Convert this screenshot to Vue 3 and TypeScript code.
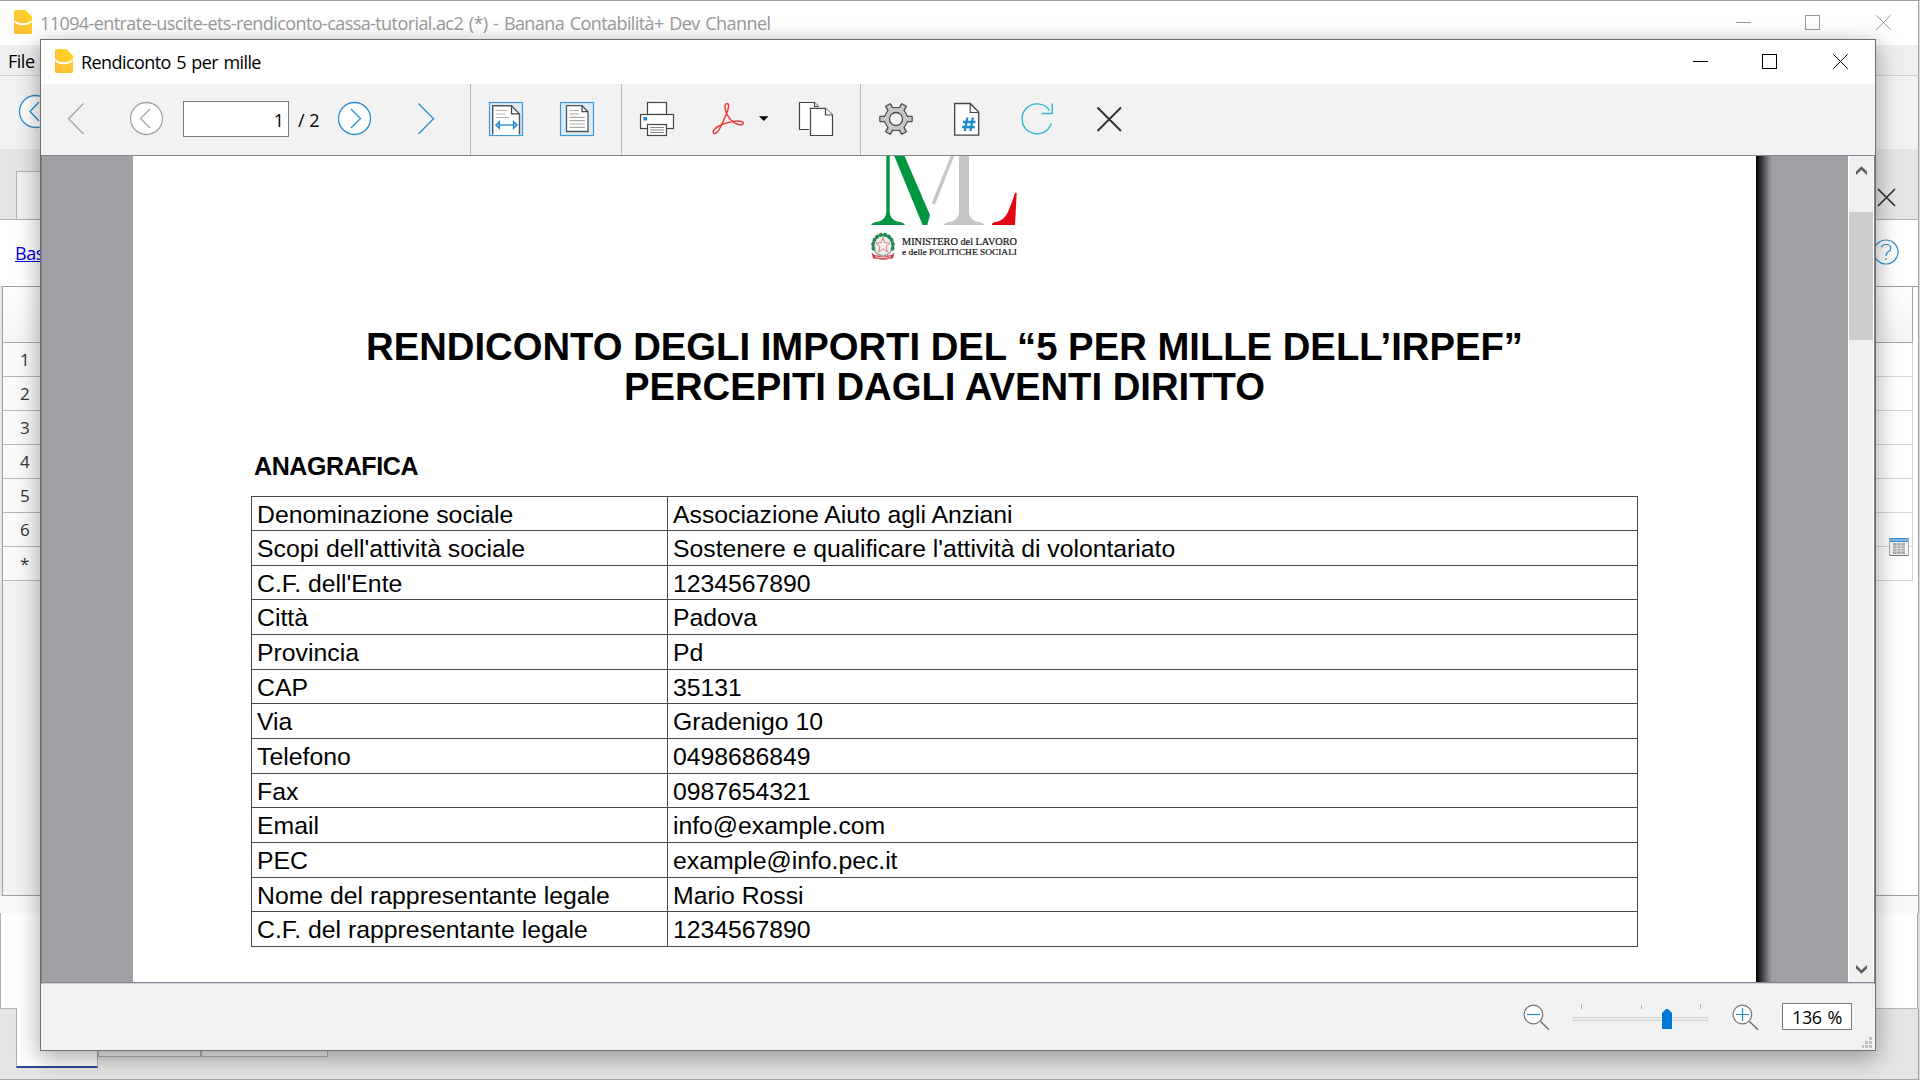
<script setup lang="ts">
interface Entry {
  label: string
  value: string
  height: number
}

const entries: Entry[] = [
  { label: 'Denominazione sociale', value: 'Associazione Aiuto agli Anziani', height: 34 },
  { label: "Scopi dell'attività sociale", value: "Sostenere e qualificare l'attività di volontariato", height: 35 },
  { label: "C.F. dell'Ente", value: '1234567890', height: 34 },
  { label: 'Città', value: 'Padova', height: 35 },
  { label: 'Provincia', value: 'Pd', height: 35 },
  { label: 'CAP', value: '35131', height: 34 },
  { label: 'Via', value: 'Gradenigo 10', height: 35 },
  { label: 'Telefono', value: '0498686849', height: 35 },
  { label: 'Fax', value: '0987654321', height: 34 },
  { label: 'Email', value: 'info@example.com', height: 35 },
  { label: 'PEC', value: 'example@info.pec.it', height: 35 },
  { label: 'Nome del rappresentante legale', value: 'Mario Rossi', height: 34 },
  { label: 'C.F. del rappresentante legale', value: '1234567890', height: 35 },
]

const sheetRows: string[] = ['1', '2', '3', '4', '5', '6', '*']
const gearTeeth: number[] = [0, 60, 120, 180, 240, 300]
const leafAngles: number[] = [165, 188, 211, 234, 257, 283, 306, 329, 352, 15]
</script>

<template>
  <div class="screen">
    <div class="main-window">
      <header class="main-title">
        <svg class="app-icon" viewBox="0 0 18 24">
          <defs>
            <linearGradient id="bananaMain" x1="1" y1="0" x2="0" y2="1">
              <stop offset="0" stop-color="#ffd91f" /><stop offset="1" stop-color="#ffb940" />
            </linearGradient>
          </defs>
          <path d="M2 0H11.5L18 6.5V22.500Q18 24 16.500 24H1.500Q0 24 0 22.500V2Q0 0 2 0Z" fill="url(#bananaMain)" />
          <path d="M0 10.500Q9 16 18 10.500V11.500Q15 15.300 9 15.300Q3 15.300 0 11.800Z" fill="#fff" />
        </svg>
        <span class="main-title-text">11094-entrate-uscite-ets-rendiconto-cassa-tutorial.ac2 (*) - Banana Contabilità+ Dev Channel</span>
        <svg class="window-controls" width="160" height="44" viewBox="1734 1 160 44" fill="none" stroke="#999">
          <path d="M1736 22.500H1751" />
          <rect x="1805.500" y="15.500" width="14" height="14" />
          <path d="M1876.300 15.300L1890.700 29.700M1890.700 15.300L1876.300 29.700" />
        </svg>
      </header>
      <nav class="main-menu"><span>File</span></nav>
      <div class="main-toolbar">
        <svg width="40" height="73" viewBox="0 76 40 73" fill="#fff" stroke="#2a8dd0" stroke-width="1.300">
          <circle cx="35.500" cy="111.500" r="16" /><path d="M39 102L30 111.500L39 121" fill="none" />
        </svg>
      </div>
      <div class="main-tabs">
        <div class="main-tab"></div>
        <svg width="40" height="40" viewBox="1870 179 40 40" stroke="#333" stroke-width="1.700">
          <path d="M1878 189L1895 206M1895 189L1878 206" />
        </svg>
      </div>
      <div class="view-bar">
        <a class="view-link">Base</a>
        <svg width="40" height="40" viewBox="1870 233 40 40" fill="none" stroke="#2a8dd0" stroke-width="1.200">
          <circle cx="1886" cy="252" r="12" />
          <path d="M1881.500 247.500Q1882 244.500 1886 244.500Q1890.700 244.500 1890.700 248.500Q1890.700 250.500 1888 252Q1886 253.200 1886 256" />
          <path d="M1886 258.200V259.800" stroke-width="1.500" />
        </svg>
      </div>
      <div class="sheet">
        <div class="sheet-numbers">
          <div class="sheet-corner"></div>
          <div v-for="n in sheetRows" :key="n" class="sheet-number">{{ n }}</div>
        </div>
        <div class="sheet-body">
          <div class="sheet-head"></div>
          <div v-for="n in sheetRows" :key="n" class="sheet-row"></div>
          <svg class="calendar" width="20" height="18" viewBox="0 0 20 18">
            <rect x=".5" y=".5" width="19" height="17" fill="#f4f4f4" stroke="#aaa" />
            <rect x="1" y="0" width="18" height="4" fill="#7dbcec" /><path d="M1 .5H19M1 3.500H19" stroke="#3d8ccc" />
            <rect x="4" y="5" width="12" height="11" fill="#a8a8a8" />
            <path d="M4 8H16M4 10.500H16M4 13H16M8 5V16M12 5V16" stroke="#eee" stroke-width=".8" />
            <path d="M1 17.500H19" stroke="#777" />
          </svg>
        </div>
      </div>
      <div class="splitter"></div>
      <div class="info-panel"></div>
      <footer class="bottom-tabs">
        <div class="bottom-tab active"></div>
        <div class="bottom-tab second"></div>
        <div class="bottom-tab third"></div>
      </footer>
    </div>

    <div class="dialog">
      <header class="dialog-title">
        <svg class="app-icon" viewBox="0 0 18 24">
          <path d="M2 0H11.5L18 6.5V22.500Q18 24 16.500 24H1.500Q0 24 0 22.500V2Q0 0 2 0Z" fill="url(#bananaMain)" />
          <path d="M0 10.500Q9 16 18 10.500V11.500Q15 15.300 9 15.300Q3 15.300 0 11.800Z" fill="#fff" />
        </svg>
        <span class="dialog-title-text">Rendiconto 5 per mille</span>
        <svg class="window-controls" width="160" height="44" viewBox="1691 40 160 44" fill="none" stroke="#000">
          <path d="M1693 61.500H1708" />
          <rect x="1762.500" y="54.500" width="14" height="14" />
          <path d="M1833.300 54.300L1847.700 68.700M1847.700 54.300L1833.300 68.700" />
        </svg>
      </header>

      <div class="toolbar">
        <svg class="tool first" viewBox="1 0 70 71" fill="none" stroke="#a3a3a3" stroke-width="1.300">
          <path d="M43.500 19.500L28.500 34.800L43.500 50" />
        </svg>
        <svg class="tool" viewBox="0 0 71 71" fill="#fff" stroke="#a3a3a3" stroke-width="1.300">
          <circle cx="35.500" cy="34.500" r="16" /><path d="M39 25L29.500 34.500L39 44" fill="none" />
        </svg>
        <div class="page-input">1</div>
        <div class="page-total">/ 2</div>
        <svg class="tool" viewBox="0 0 71 71" fill="#fff" stroke="#2a8dd0" stroke-width="1.300">
          <circle cx="35.500" cy="34.500" r="16" /><path d="M32 25L41.500 34.500L32 44" fill="none" />
        </svg>
        <svg class="tool" viewBox="0 0 71 71" fill="none" stroke="#2a8dd0" stroke-width="1.300">
          <path d="M28.500 19.500L43.500 34.800L28.500 50" />
        </svg>
        <i class="separator gap-nine"></i>
        <svg class="tool" viewBox="0 0 71 71" fill="none">
          <rect x="18.500" y="18.500" width="33" height="33" fill="#dcecf7" stroke="#3f9ad6" stroke-width="1.200" />
          <path d="M21.500 51V21.500H40L48.500 30V51Z" fill="#fff" />
          <path d="M21.700 50.500V21.700H40.500L48.500 30V50.500" stroke="#555" stroke-width="1.400" />
          <path d="M40.500 21.700V29.800H48.500" stroke="#444" stroke-width="1.200" />
          <path d="M25 26.500H36.500M25 30H34M25 33.500H38" stroke="#b3b3b3" stroke-width="1.100" />
          <path d="M25 41H46" stroke="#1e88d0" stroke-width="1.300" />
          <path d="M28.500 37.500V44.500L24.800 41ZM42.500 37.500V44.500L46.200 41Z" fill="#8bc0e6" stroke="#1e88d0" stroke-width="1.200" />
        </svg>
        <svg class="tool" viewBox="0 0 71 71" fill="none">
          <rect x="18.500" y="18.500" width="33" height="33" fill="#dcecf7" stroke="#3f9ad6" stroke-width="1.200" />
          <path d="M24.500 21.700H40L46 27.700V47.500H24.500Z" fill="#fff" stroke="#555" stroke-width="1.300" />
          <path d="M40 21.700V27.700H46" stroke="#444" stroke-width="1.200" />
          <path d="M27.500 26.500H37M27.500 30H37M27.500 33.300H43M27.500 36.700H43M27.500 40H43M27.500 43.300H43" stroke="#aaa" stroke-width="1.200" />
        </svg>
        <i class="separator gap-eight"></i>
        <svg class="tool" viewBox="0 0 71 71" fill="#fff" stroke="#444" stroke-width="1.200">
          <rect x="25.500" y="18.500" width="19" height="12" />
          <rect x="18.500" y="30.500" width="33" height="14" />
          <rect x="25.500" y="40.500" width="19" height="11" />
          <rect x="21.500" y="33" width="3.500" height="3.500" fill="#1e88d0" stroke="none" />
          <path d="M28 43.500H42M28 46H42M28 48.500H42" stroke="#888" />
        </svg>
        <svg class="tool" viewBox="0 0 71 71" fill="none" stroke="#f03a3a" stroke-width="1.500" stroke-linejoin="round">
          <path d="M32 21.500C33 18.500 36 19 35.600 22.500C35.200 27.500 31 35.500 27.500 43C25.500 47.500 22.500 50.500 20.800 49.300C18.800 47.800 22 43.500 27 41.500C32 39.300 38.500 37.200 44.500 37C50.500 36.900 51.500 39.500 49.300 40.500C46.500 41.600 41.500 39.500 37.500 35.500C34 31.500 31 25 32 21.500Z" />
        </svg>
        <svg class="dropdown" width="16" height="71" viewBox="755 84 16 71"><path d="M759 116.200H768.500L763.800 121Z" fill="#000" /></svg>
        <svg class="tool" viewBox="0 0 71 71" fill="#fff" stroke="#444" stroke-width="1.200">
          <path d="M28.500 45.500H19.500V18.500H34.500L38.500 22.500V24H30V45.500Z" stroke="none" />
          <path d="M29 45.500H19.500V18.500H34.500L38.500 22.500" fill="none" />
          <path d="M34.500 18.500V22.500H38.500" />
          <path d="M30.500 24.300H45.500L52.500 31V51.500H30.500Z" />
          <path d="M45.500 24.300V31H52.500" />
        </svg>
        <i class="separator gap-nine"></i>
        <svg class="tool" viewBox="0 0 71 71">
          <g transform="translate(35 35)" fill="#4a4a4a" stroke="#4a4a4a" stroke-width="1.500" stroke-linejoin="round">
            <path v-for="a in gearTeeth" :key="a" d="M9 -4.500L11.500 -2.600H16V2.600H11.500L9 4.500Z" :transform="`rotate(${a})`" />
            <circle r="11.200" />
          </g>
          <g transform="translate(35 35)" fill="#c5c5c5">
            <path v-for="a in gearTeeth" :key="a" d="M8 -4.300L11.500 -2H15.600V2H11.500L8 4.300Z" :transform="`rotate(${a})`" />
            <circle r="10.900" />
            <circle r="6.500" fill="#f2f2f2" stroke="#4a4a4a" stroke-width="1.300" />
          </g>
        </svg>
        <svg class="tool" viewBox="0 0 71 71">
          <path d="M22.700 19.500H38.200L46.700 28V51.200H22.700Z" fill="#fff" stroke="#444" stroke-width="1.300" />
          <path d="M38.200 19.500V28.500H46.700" fill="none" stroke="#444" stroke-width="1.200" />
          <path d="M35.300 33.500L32.800 47M40.900 33.500L38.400 47M31 38H43.500M30.200 43H42.700" fill="none" stroke="#1e88d0" stroke-width="2.300" />
        </svg>
        <svg class="tool" viewBox="0 0 71 71" fill="none" stroke="#2fb7d0" stroke-width="1.400">
          <path d="M48.300 39.500A15 15 0 1 1 46.500 26.500" />
          <path d="M49.300 19.500V29.500H38.500" />
        </svg>
        <svg class="tool" viewBox="0 0 71 71" stroke="#333" stroke-width="2">
          <path d="M23.500 23.500L47 47M47 23.500L23.500 47" />
        </svg>
      </div>

      <div class="viewport">
        <main class="page">
          <svg class="logo" width="150" height="106" viewBox="870 156 150 106">
            <g fill="#009640">
              <path d="M886.300 156H889.700V212Q890 219 897 221.500Q904.700 222.500 904.700 225H871.300Q871.300 222.500 879 221.500Q886 219 886.300 212Z" />
              <path d="M894.300 156H904.500L930 215L927.300 225H922.600Z" />
            </g>
            <g fill="#c6c6c6">
              <path d="M950.700 156H954.200L935 204.500L931.700 203.300Z" />
              <path d="M959 156H969V212Q969.500 219 976 221.500Q984 222.500 984 225H944Q944 222.500 952 221.500Q958.500 219 959 212Z" />
            </g>
            <path d="M1015 193L1016.700 192.700L1015 225H992Q991.500 222.300 996 222Q1004 220.500 1008 212Q1011.500 204 1015 193Z" fill="#e30613" />
            <g transform="translate(883 245.500) scale(1 1.080)">
              <circle r="9.500" fill="#eee" stroke="#8b9a90" stroke-width="1" />
              <ellipse v-for="a in leafAngles" :key="a" cx="10" cy="0" rx="1.900" ry="2.300" fill="#2b8a52" :transform="`rotate(${a})`" />
              <path d="M0 -7.500L1.800 -2.500L7 -2.300L3 .9L4.400 6L0 3L-4.400 6L-3 .9L-7 -2.300L-1.800 -2.500Z" fill="#f6f0ee" stroke="#cf7a78" stroke-width=".9" />
              <path d="M-11.500 6.500Q-8 10 -5 9Q0 11.500 5 9Q8 10 11.500 6.500L10 12L5.500 12.300Q0 14 -5.500 12.300L-10 12Z" fill="#c9404a" />
              <path d="M-8 10.500Q0 12.500 8 10.500" fill="none" stroke="#f4dcdc" stroke-width=".9" />
            </g>
            <g font-family="'Liberation Serif', serif" fill="#111" stroke="#111" stroke-width=".2">
              <text x="902" y="244.500" font-size="10" textLength="115" lengthAdjust="spacingAndGlyphs">MINISTERO del LAVORO</text>
              <text x="902" y="255.200" font-size="9.200" textLength="115" lengthAdjust="spacingAndGlyphs">e delle POLITICHE SOCIALI</text>
            </g>
          </svg>
          <h1>
            <span>RENDICONTO DEGLI IMPORTI DEL “5 PER MILLE DELL’IRPEF”</span><br />
            <span>PERCEPITI DAGLI AVENTI DIRITTO</span>
          </h1>
          <h2>ANAGRAFICA</h2>
          <div class="table">
            <div v-for="e in entries" :key="e.label" class="row" :style="{ height: e.height + 'px' }">
              <div class="cell label">{{ e.label }}</div>
              <div class="cell value">{{ e.value }}</div>
            </div>
          </div>
        </main>
        <div class="page-shadow"></div>
        <div class="margin-right"></div>
        <div class="scrollbar">
          <svg width="24" height="56" viewBox="1849 156 24 56"><path d="M1856 175V171.500L1861.500 166.300L1867 171.500V175L1861.500 170Z" fill="#606060" /></svg>
          <div class="thumb"></div>
          <svg class="arrow-down" width="24" height="30" viewBox="1849 952 24 30"><path d="M1856 965V968.500L1861.500 973.700L1867 968.500V965L1861.500 970Z" fill="#606060" /></svg>
        </div>
      </div>

      <footer class="statusbar">
        <svg width="52" height="65" viewBox="1518 984 52 65" fill="none">
          <path d="M1540.500 1021.500L1549 1029.700" stroke="#666" stroke-width="1.200" />
          <circle cx="1533.400" cy="1014.500" r="9.300" fill="#fff" stroke="#777" stroke-width="1.200" />
          <path d="M1527 1014.500H1540" stroke="#1e88d0" stroke-width="1.200" />
        </svg>
        <svg width="162" height="65" viewBox="1570 984 162 65">
          <rect x="1573.500" y="1017.500" width="134" height="3" fill="#e7eaea" stroke="#d6d6d6" />
          <path d="M1581.500 1004V1009M1641.500 1005V1009M1700.500 1004V1009" stroke="#b4b4a4" />
          <path d="M1662 1029V1013L1666 1009H1668L1672 1013V1029Z" fill="#0078d7" />
        </svg>
        <svg width="50" height="65" viewBox="1732 984 50 65" fill="none">
          <path d="M1749.500 1021.500L1758 1029.700" stroke="#666" stroke-width="1.200" />
          <circle cx="1742.400" cy="1014.500" r="9.300" fill="#fff" stroke="#777" stroke-width="1.200" />
          <path d="M1736 1014.500H1749M1742.500 1008V1021" stroke="#1e88d0" stroke-width="1.200" />
        </svg>
        <div class="zoom-box">136 %</div>
        <svg class="grip" width="23" height="65" viewBox="1852 984 23 65" fill="#bfbfbf">
          <path d="M1869 1037h3v3h-3zM1869 1041h3v3h-3zM1865 1041h3v3h-3zM1869 1045h3v3h-3zM1865 1045h3v3h-3zM1862 1045h2v3h-2z" />
        </svg>
      </footer>
    </div>
  </div>
</template>

<style>
body {
  margin: 0;
  overflow: hidden;
}
</style>

<style scoped>
.screen {
  position: relative;
  width: 1920px;
  height: 1080px;
  overflow: hidden;
  font-family: 'Open Sans', 'Noto Sans', sans-serif;
  color: #000;
}
.screen * {
  box-sizing: border-box;
}
svg {
  display: block;
  flex: none;
}
.main-window {
  width: 1920px;
  height: 1080px;
  display: flex;
  flex-direction: column;
  border-top: 1px solid #a0a0a0;
  border-bottom: 1px solid #a8a8a8;
  border-right: 1px solid #dcdcdc;
  background: #e5e5e5;
}
.main-window > * {
  border-right: 1px solid #a0a0a0;
  flex: none;
}
.app-icon {
  width: 18px;
  height: 24px;
}
.main-title {
  height: 44px;
  padding-left: 14px;
  display: flex;
  align-items: center;
  background: #fff;
}
.main-title .app-icon {
  margin-top: -2px;
}
.main-title-text {
  margin-left: 8px;
  font-size: 18px;
  line-height: 24px;
  letter-spacing: -0.58px;
  word-spacing: 1.5px;
  color: #999;
  white-space: nowrap;
}
.window-controls {
  margin-left: auto;
  margin-right: 24px;
}
.main-menu {
  height: 31px;
  padding: 4px 0 0 8px;
  background: #efefef;
  border-bottom: 1px solid #cfcfcf;
  font-size: 18px;
  line-height: 25px;
  letter-spacing: -0.5px;
}
.main-toolbar {
  height: 73px;
  background: #f2f2f2;
}
.main-tabs {
  height: 71px;
  display: flex;
  justify-content: space-between;
  align-items: flex-end;
  padding: 0 8px 0 16px;
  background: #e5e5e5;
  border-bottom: 1px solid #b0b0b0;
}
.main-tab {
  width: 120px;
  height: 48px;
  background: #f2f2f2;
  border: 1px solid #b4b4b4;
  border-bottom: 0;
}
.view-bar {
  height: 66px;
  display: flex;
  justify-content: space-between;
  align-items: center;
  padding: 0 8px 0 15px;
  background: #fff;
}
.view-link {
  color: #0000e6;
  text-decoration: underline;
  font-size: 18px;
  letter-spacing: -0.5px;
}
.sheet {
  height: 610px;
  display: flex;
  margin-left: 2px;
  border: 1px solid #a0a0a0;
  background: #fff;
}
.sheet-numbers {
  width: 120px;
  background: #f2f2f2;
}
.sheet-corner {
  height: 56px;
  background: linear-gradient(#fefefe, #f6f6f6);
  border-bottom: 1px solid #a8a8a8;
}
.sheet-number {
  height: 34px;
  padding: 1px 0 0 17px;
  background: #fafafa;
  border-bottom: 1px solid #b8b8b8;
  font-size: 17px;
  line-height: 32px;
  color: #333;
}
.sheet-body {
  position: relative;
  flex: 1;
  margin-right: 5px;
}
.sheet-head {
  height: 56px;
  background: linear-gradient(#fff, #f4f4f4);
  border-bottom: 1px solid #a8a8a8;
  border-right: 1px solid #a8a8a8;
}
.sheet-row {
  height: 34px;
  border-bottom: 1px solid #d4d4d4;
  border-right: 1px solid #d4d4d4;
}
.calendar {
  position: absolute;
  right: 4px;
  top: 251px;
}
.splitter {
  height: 17px;
  background: #f9f9f9;
}
.info-panel {
  height: 96px;
  margin-right: 1px;
  background: #fff;
  border-left: 1px solid #b0b0b0;
  border-bottom: 1px solid #b4b4b4;
}
.bottom-tabs {
  flex: 1 !important;
  display: flex;
  align-items: flex-start;
  padding-left: 16px;
}
.bottom-tab {
  height: 48px;
  background: #f0f0f0;
  border: 1px solid #b0b0b0;
  border-top: 0;
}
.bottom-tab.active {
  width: 82px;
  height: 60px;
  margin-top: -1px;
  background: #fff;
  border-bottom: 2px solid #2f4699;
}
.bottom-tab.second {
  width: 103px;
}
.bottom-tab.third {
  width: 127px;
}

.dialog {
  position: absolute;
  left: 40px;
  top: 39px;
  width: 1836px;
  height: 1012px;
  display: flex;
  flex-direction: column;
  border: 1px solid #6e6e6e;
  background: #f2f2f2;
  box-shadow: 0 6px 22px 1px rgba(0, 0, 0, 0.34);
}
.dialog-title {
  height: 44px;
  flex: none;
  display: flex;
  align-items: center;
  padding-left: 14px;
  background: #fff;
}
.dialog-title .app-icon {
  margin-top: -2px;
}
.dialog-title-text {
  margin: 0 0 0 8px;
  font-size: 18px;
  line-height: 24px;
  letter-spacing: -0.58px;
  word-spacing: 1.3px;
  white-space: nowrap;
}
.dialog-title .window-controls {
  margin-right: 24px;
}
.toolbar {
  height: 72px;
  flex: none;
  display: flex;
  border-bottom: 1px solid #82858f;
}
.tool {
  width: 71px;
  height: 71px;
}
.tool.first {
  width: 70px;
}
.page-input {
  width: 106px;
  height: 36px;
  margin: 17px 0 0 1px;
  padding-right: 4px;
  border: 1px solid #7a7a7a;
  background: #fff;
  text-align: right;
  font-size: 18px;
  line-height: 37px;
}
.page-total {
  width: 30px;
  padding-left: 9px;
  margin-top: 18px;
  font-size: 18px;
  line-height: 37px;
  white-space: nowrap;
}
.separator {
  width: 1px;
  flex: none;
  background: #b8b8b8;
}
.gap-nine {
  margin-left: 9px;
}
.gap-eight {
  margin-left: 8px;
}
.dropdown {
  margin-left: -9px;
  margin-right: 9px;
}
.viewport {
  height: 828px;
  flex: none;
  display: flex;
  padding-left: 91px;
  background: #a09fa4;
  border-left: 1px solid #82828c;
  border-right: 1px solid #82828c;
  border-bottom: 1px solid #d2d5da;
  box-shadow: inset 0 -1px 0 #82858f;
}
.page {
  width: 1623px;
  height: 826px;
  flex: none;
  overflow: hidden;
  background: #fff;
  font-family: 'Liberation Sans', Arial, sans-serif;
}
.page-shadow {
  width: 16px;
  height: 826px;
  flex: none;
  background: linear-gradient(90deg, #000 0%, #2e2e30 30%, #6c6c6f 65%, #a09fa4 100%);
}
.margin-right {
  flex: 1;
}
.scrollbar {
  width: 26px;
  height: 826px;
  flex: none;
  display: flex;
  flex-direction: column;
  background: #efefef;
  border-left: 1px solid #fff;
  border-right: 1px solid #fff;
}
.thumb {
  height: 128px;
  background: #cdcdcd;
}
.arrow-down {
  margin-top: auto;
}
.logo {
  margin-left: 737px;
}
h1 {
  margin: 65px 0 0;
  text-align: center;
  font-size: 38.25px;
  line-height: 40px;
  font-weight: bold;
  white-space: nowrap;
}
h2 {
  margin: 45px 0 0 121px;
  font-size: 25px;
  line-height: 28px;
  font-weight: bold;
  letter-spacing: -0.4px;
}
.table {
  width: 1387px;
  margin: 16px 0 0 118px;
  border: 1px solid #4a4a4a;
  border-bottom: 0;
}
.row {
  display: flex;
  border-bottom: 1px solid #4a4a4a;
}
.cell {
  padding-left: 5px;
  font-size: 24.8px;
  line-height: 36px;
  white-space: nowrap;
}
.cell.label {
  width: 416px;
  border-right: 1px solid #4a4a4a;
}
.cell.value {
  letter-spacing: -0.03px;
}
.statusbar {
  flex: 1;
  display: flex;
  justify-content: flex-end;
}
.zoom-box {
  width: 70px;
  height: 27px;
  margin-top: 19px;
  border: 1px solid #7a7a7a;
  background: #fff;
  text-align: center;
  font-size: 18px;
  line-height: 27px;
  letter-spacing: -0.4px;
  word-spacing: 1.5px;
}
</style>
